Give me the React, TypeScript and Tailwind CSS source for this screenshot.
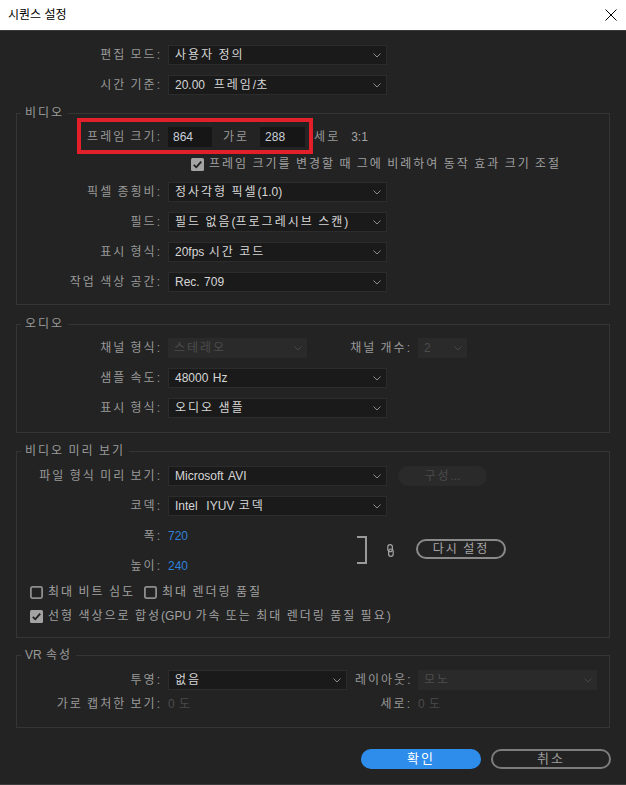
import React from "react";

function T({ t }: { t: string }) {
  const parts: { s: string; k: number }[] = [];
  for (const ch of t) {
    const k = /[\uAC00-\uD7A3]/.test(ch) ? 2 : ch === " " ? 1 : 0;
    const last = parts[parts.length - 1];
    if (last && last.k === k) last.s += ch;
    else parts.push({ s: ch, k });
  }
  return (
    <span>
      {parts.map((p, i) =>
        p.k === 2 ? (
          <span key={i} className="tracking-[2px]">
            {p.s}
          </span>
        ) : p.k === 1 ? (
          <span key={i} className="tracking-[1px] whitespace-pre">
            {p.s}
          </span>
        ) : (
          <span key={i}>{p.s}</span>
        )
      )}
    </span>
  );
}

function Chevron({ dis }: { dis?: boolean }) {
  return (
    <svg width="8" height="5" viewBox="0 0 8 5" className="shrink-0">
      <polyline
        points="0.5,0.5 4,4 7.5,0.5"
        fill="none"
        stroke={dis ? "#464646" : "#8c8c8c"}
        strokeWidth="1"
      />
    </svg>
  );
}

function Sel({ v, w, dis }: { v: string; w: string; dis?: boolean }) {
  return (
    <div
      className={
        w +
        " h-[20px] shrink-0 flex items-center justify-between pl-[6px] pr-[5px] " +
        (dis
          ? "bg-[#2a2a2a] text-[#4c4c4c]"
          : "bg-[#1a1a1a] border border-[#2c2c2c] text-[#d6d6d6]")
      }
    >
      <span className="whitespace-nowrap">
        <T t={v} />
      </span>
      <Chevron dis={dis} />
    </div>
  );
}

function Label({ t, w = "w-[143px]" }: { t: string; w?: string }) {
  return (
    <div className={w + " shrink-0 text-right whitespace-nowrap text-[#999999]"}>
      <T t={t} />
    </div>
  );
}

function Check({ on }: { on?: boolean }) {
  return on ? (
    <svg width="13" height="13" viewBox="0 0 13 13" className="shrink-0">
      <rect x="0" y="0" width="13" height="13" rx="1.5" fill="#a3a3a3" />
      <path d="M2.8 6.8 L5.3 9.3 L10.2 3.6" fill="none" stroke="#1f1f1f" strokeWidth="1.8" />
    </svg>
  ) : (
    <svg width="13" height="13" viewBox="0 0 13 13" className="shrink-0">
      <rect x="0.9" y="0.9" width="11.2" height="11.2" rx="1.5" fill="none" stroke="#8e8e8e" strokeWidth="1.8" />
    </svg>
  );
}

function Group({
  title,
  cls,
  children,
}: {
  title: string;
  cls: string;
  children: React.ReactNode;
}) {
  return (
    <div className={"relative border border-[#353535] " + cls}>
      <div className="absolute -top-[9px] left-[4px] px-[4px] h-[16px] leading-[16px] bg-[#232323] text-[#9a9a9a] whitespace-nowrap">
        <T t={title} />
      </div>
      {children}
    </div>
  );
}

function Row({ cls = "", children }: { cls?: string; children: React.ReactNode }) {
  return <div className={"flex items-center h-[20px] gap-[8px] " + cls}>{children}</div>;
}

export default function App() {
  return (
    <div
      className="w-[626px] h-[785px] flex flex-col bg-[#232323] text-[12px] leading-[16px] overflow-hidden"
      style={{ fontFamily: '"Liberation Sans", "Noto Sans CJK KR", sans-serif' }}
    >
      {/* Title bar */}
      <div className="h-[30px] shrink-0 bg-white flex items-center justify-between pl-[8px] pr-[8px]">
        <span className="text-black text-[12px]">시퀀스 설정</span>
        <svg width="12" height="12" viewBox="0 0 12 12" className="mr-[1px]">
          <path d="M0.5 0.5 L11.5 11.5 M11.5 0.5 L0.5 11.5" stroke="#000" strokeWidth="1" />
        </svg>
      </div>

      <div className="flex-1 border-t border-b border-[#3c3c3c] px-[16px] pt-[14px] flex flex-col">
        <div className="pl-[1px]">
          <Row>
            <Label t="편집 모드:" />
            <Sel w="w-[219px]" v="사용자 정의" />
          </Row>
          <Row cls="mt-[10px]">
            <Label t="시간 기준:" />
            <Sel w="w-[219px]" v="20.00  프레임/초" />
          </Row>
        </div>

        {/* 비디오 */}
        <Group title="비디오" cls="mt-[18px] pt-[13px] pb-[12px]">
          <Row cls="relative">
            <Label t="프레임 크기:" />
            <div className="w-[44px] h-[20px] bg-[#161616] text-[#c9cfd8] pl-[5px] flex items-center">864</div>
            <span className="ml-[3px] text-[#999999]">
              <T t="가로" />
            </span>
            <div className="ml-[3px] w-[45px] h-[20px] bg-[#161616] text-[#c9cfd8] pl-[5px] flex items-center">288</div>
            <span className="ml-[1px] text-[#999999]">
              <T t="세로" />
            </span>
            <span className="ml-[3px] text-[#a3a3a3]">3:1</span>
            <div className="absolute left-[60px] -top-[9px] w-[236px] h-[36px] border-4 border-[#e3202a]" />
          </Row>
          <div className="flex items-center h-[20px] mt-[7px] ml-[174px] gap-[5px] text-[#a0a0a0] whitespace-nowrap">
            <Check on />
            <T t="프레임 크기를 변경할 때 그에 비례하여 동작 효과 크기 조절" />
          </div>
          <Row cls="mt-[8px]">
            <Label t="픽셀 종횡비:" />
            <Sel w="w-[219px]" v="정사각형 픽셀(1.0)" />
          </Row>
          <Row cls="mt-[10px]">
            <Label t="필드:" />
            <Sel w="w-[219px]" v="필드 없음(프로그레시브 스캔)" />
          </Row>
          <Row cls="mt-[10px]">
            <Label t="표시 형식:" />
            <Sel w="w-[219px]" v="20fps 시간 코드" />
          </Row>
          <Row cls="mt-[10px]">
            <Label t="작업 색상 공간:" />
            <Sel w="w-[219px]" v="Rec. 709" />
          </Row>
        </Group>

        {/* 오디오 */}
        <Group title="오디오" cls="mt-[19px] pt-[13px] pb-[14px]">
          <Row>
            <Label t="채널 형식:" />
            <Sel w="w-[139px]" dis v="스테레오" />
            <Label w="w-[95px]" t="채널 개수:" />
            <Sel w="w-[49px]" dis v="2" />
          </Row>
          <Row cls="mt-[10px]">
            <Label t="샘플 속도:" />
            <Sel w="w-[219px]" v="48000 Hz" />
          </Row>
          <Row cls="mt-[10px]">
            <Label t="표시 형식:" />
            <Sel w="w-[219px]" v="오디오 샘플" />
          </Row>
        </Group>

        {/* 비디오 미리 보기 */}
        <Group title="비디오 미리 보기" cls="mt-[18px] pt-[14px] pb-[11px]">
          <Row>
            <Label t="파일 형식 미리 보기:" />
            <Sel w="w-[219px]" v="Microsoft AVI" />
            <div className="ml-[3px] w-[89px] h-[20px] rounded-full bg-[#2a2a2a] text-[#4a4a4a] flex items-center justify-center">
              <T t="구성..." />
            </div>
          </Row>
          <Row cls="mt-[10px]">
            <Label t="코덱:" />
            <Sel w="w-[219px]" v="Intel  IYUV 코덱" />
          </Row>
          <div className="flex mt-[10px]">
            <div className="w-[340px] flex flex-col gap-[10px]">
              <Row>
                <Label t="폭:" />
                <span className="text-[#2f80d8]">720</span>
              </Row>
              <Row>
                <Label t="높이:" />
                <span className="text-[#2f80d8]">240</span>
              </Row>
            </div>
            <div className="mt-[10px] w-[10px] h-[28px] border-y-2 border-r-2 border-[#9a9a9a]" />
            <svg width="7" height="13" viewBox="0 0 7 13" className="ml-[20px] mt-[18px]">
              <rect x="0.8" y="0.7" width="4.6" height="7" rx="2.3" fill="none" stroke="#a3a3a3" strokeWidth="1.2" />
              <rect x="1.6" y="5" width="4.6" height="7.3" rx="2.3" fill="none" stroke="#a3a3a3" strokeWidth="1.2" />
            </svg>
            <div className="ml-[22px] mt-[13px] w-[90px] h-[20px] rounded-full border-2 border-[#8a8a8a] text-[#a6a6a6] flex items-center justify-center">
              <T t="다시 설정" />
            </div>
          </div>
          <div className="flex items-center h-[20px] mt-[6px] ml-[13px] text-[#a0a0a0] whitespace-nowrap">
            <Check />
            <span className="ml-[5px]">
              <T t="최대 비트 심도" />
            </span>
            <span className="ml-[9px] flex">
              <Check />
            </span>
            <span className="ml-[5px]">
              <T t="최대 렌더링 품질" />
            </span>
          </div>
          <div className="flex items-center h-[20px] mt-[4px] ml-[13px] gap-[5px] text-[#a0a0a0] whitespace-nowrap">
            <Check on />
            <T t="선형 색상으로 합성(GPU 가속 또는 최대 렌더링 품질 필요)" />
          </div>
        </Group>

        {/* VR 속성 */}
        <Group title="VR 속성" cls="mt-[17px] pt-[14px] pb-[13px]">
          <Row>
            <Label t="투영:" />
            <Sel w="w-[179px]" v="없음" />
            <Label w="w-[55px]" t="레이아웃:" />
            <Sel w="w-[179px]" dis v="모노" />
          </Row>
          <Row cls="mt-[4px]">
            <Label t="가로 캡처한 보기:" />
            <div className="w-[179px] text-[#4a4a4a]">
              <T t="0 도" />
            </div>
            <Label w="w-[55px]" t="세로:" />
            <div className="text-[#4a4a4a]">
              <T t="0 도" />
            </div>
          </Row>
        </Group>

        <div className="flex justify-end gap-[10px] mt-[21px] -mr-[1px]">
          <div className="w-[120px] h-[20px] rounded-full bg-[#2e8deb] text-white text-[13px] flex items-center justify-center">
            <T t="확인" />
          </div>
          <div className="w-[120px] h-[20px] rounded-full border-2 border-[#7c7c7c] text-[#9c9c9c] text-[13px] flex items-center justify-center">
            <T t="취소" />
          </div>
        </div>
      </div>
    </div>
  );
}
